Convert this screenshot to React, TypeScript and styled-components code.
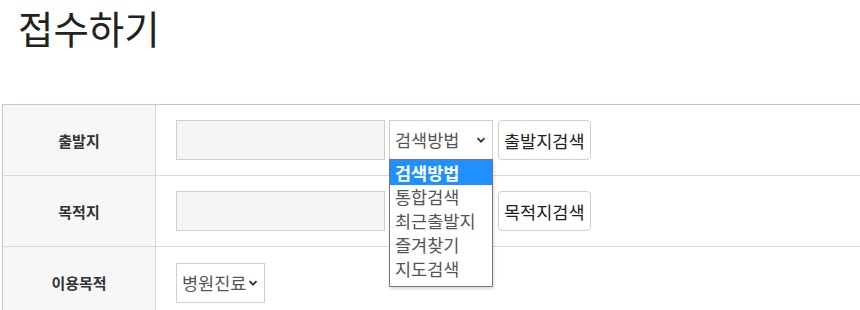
import React from "react";
import styled, { createGlobalStyle } from "styled-components";

const GlobalStyle = createGlobalStyle`
  body {
    margin: 0;
    background: #fff;
    font-family: "Noto Sans CJK KR", "Noto Sans", sans-serif;
    color: #333;
    overflow: hidden;
  }
`;

const searchOptions = ["검색방법", "통합검색", "최근출발지", "즐겨찾기", "지도검색"];

const App: React.FC = () => {
  return (
    <>
      <GlobalStyle />
      <Page>
        <Title>접수하기</Title>
        <Table>
          <Row>
            <Label>출발지</Label>
            <Cell>
              <TextBox />
              <SelectWrap>
                <SelectBox $wide>
                  <span>검색방법</span>
                  <Chevron />
                </SelectBox>
                <OptionList>
                  {searchOptions.map((opt, i) => (
                    <OptionItem key={opt} $active={i === 0}>
                      {opt}
                    </OptionItem>
                  ))}
                </OptionList>
              </SelectWrap>
              <SearchButton>출발지검색</SearchButton>
            </Cell>
          </Row>
          <Row>
            <Label>목적지</Label>
            <Cell>
              <TextBox />
              <SelectBox $wide $hidden>
                <span>검색방법</span>
                <Chevron />
              </SelectBox>
              <SearchButton>목적지검색</SearchButton>
            </Cell>
          </Row>
          <Row>
            <Label>이용목적</Label>
            <Cell>
              <SelectBox>
                <span>병원진료</span>
                <Chevron />
              </SelectBox>
            </Cell>
          </Row>
        </Table>
      </Page>
    </>
  );
};

export default App;

const Chevron: React.FC = () => (
  <svg width="10" height="10" viewBox="0 0 10 10">
    <path
      d="M1.5 3.2 L5 6.7 L8.5 3.2"
      fill="none"
      stroke="#333"
      strokeWidth="1.8"
    />
  </svg>
);

const Page = styled.div`
  padding: 0 0 0 2px;
  width: 900px;
`;

const Title = styled.h1`
  margin: 0;
  padding: 2px 0 0 16px;
  height: 104px;
  box-sizing: border-box;
  font-size: 38.5px;
  font-weight: 400;
  line-height: 50px;
  color: #222;
`;

const Table = styled.div`
  border-top: 1px solid #bccbd2;
  border-left: 1px solid #bccbd2;
`;

const Row = styled.div`
  display: flex;
  height: 71px;
  border-bottom: 1px solid #dadada;
  box-sizing: border-box;

  &:last-child {
    border-bottom: none;
  }
`;

const Label = styled.div`
  width: 152px;
  flex-shrink: 0;
  background: #f7f7f7;
  border-right: 1px solid #dadada;
  display: flex;
  align-items: center;
  justify-content: center;
  font-size: 15px;
  font-weight: 700;
  color: #333;
`;

const Cell = styled.div`
  display: flex;
  align-items: center;
  gap: 4px;
  padding: 0 0 0 20px;
`;

const TextBox = styled.div`
  width: 207px;
  height: 38px;
  background: #f5f5f5;
  border: 1px solid #cfcfcf;
`;

const SelectWrap = styled.div`
  position: relative;
`;

const SelectBox = styled.div<{ $wide?: boolean; $hidden?: boolean }>`
  width: ${({ $wide }) => ($wide ? "104px" : "89px")};
  height: 40px;
  box-sizing: border-box;
  border: 1px solid #cfcfcf;
  background: #fff;
  display: flex;
  align-items: center;
  justify-content: space-between;
  padding: 0 6px 0 5px;
  font-size: 17.5px;
  color: #555;
  white-space: nowrap;
  visibility: ${({ $hidden }) => ($hidden ? "hidden" : "visible")};

  span {
    line-height: 1;
  }
`;

const OptionList = styled.div`
  position: absolute;
  top: 39px;
  left: 0;
  width: 104px;
  box-sizing: border-box;
  border: 1px solid #767676;
  background: #fff;
  padding: 0 0 5px;
  box-shadow: 1px 2px 3px rgba(0, 0, 0, 0.15);
  z-index: 2;
`;

const OptionItem = styled.div<{ $active?: boolean }>`
  height: 24px;
  line-height: 24px;
  padding: 0 5px;
  font-size: 17.5px;
  white-space: nowrap;
  color: ${({ $active }) => ($active ? "#fff" : "#555")};
  background: ${({ $active }) => ($active ? "#1e90ff" : "transparent")};
  font-weight: ${({ $active }) => ($active ? 700 : 400)};

  &:first-child {
    height: 25px;
    line-height: 25px;
  }
`;

const SearchButton = styled.div`
  margin-left: 1px;
  height: 40px;
  box-sizing: border-box;
  padding: 0 5px;
  border: 1px solid #cfcfcf;
  border-radius: 4px;
  display: flex;
  align-items: center;
  font-size: 17.5px;
  white-space: nowrap;
  color: #222;
  background: #fff;
`;
